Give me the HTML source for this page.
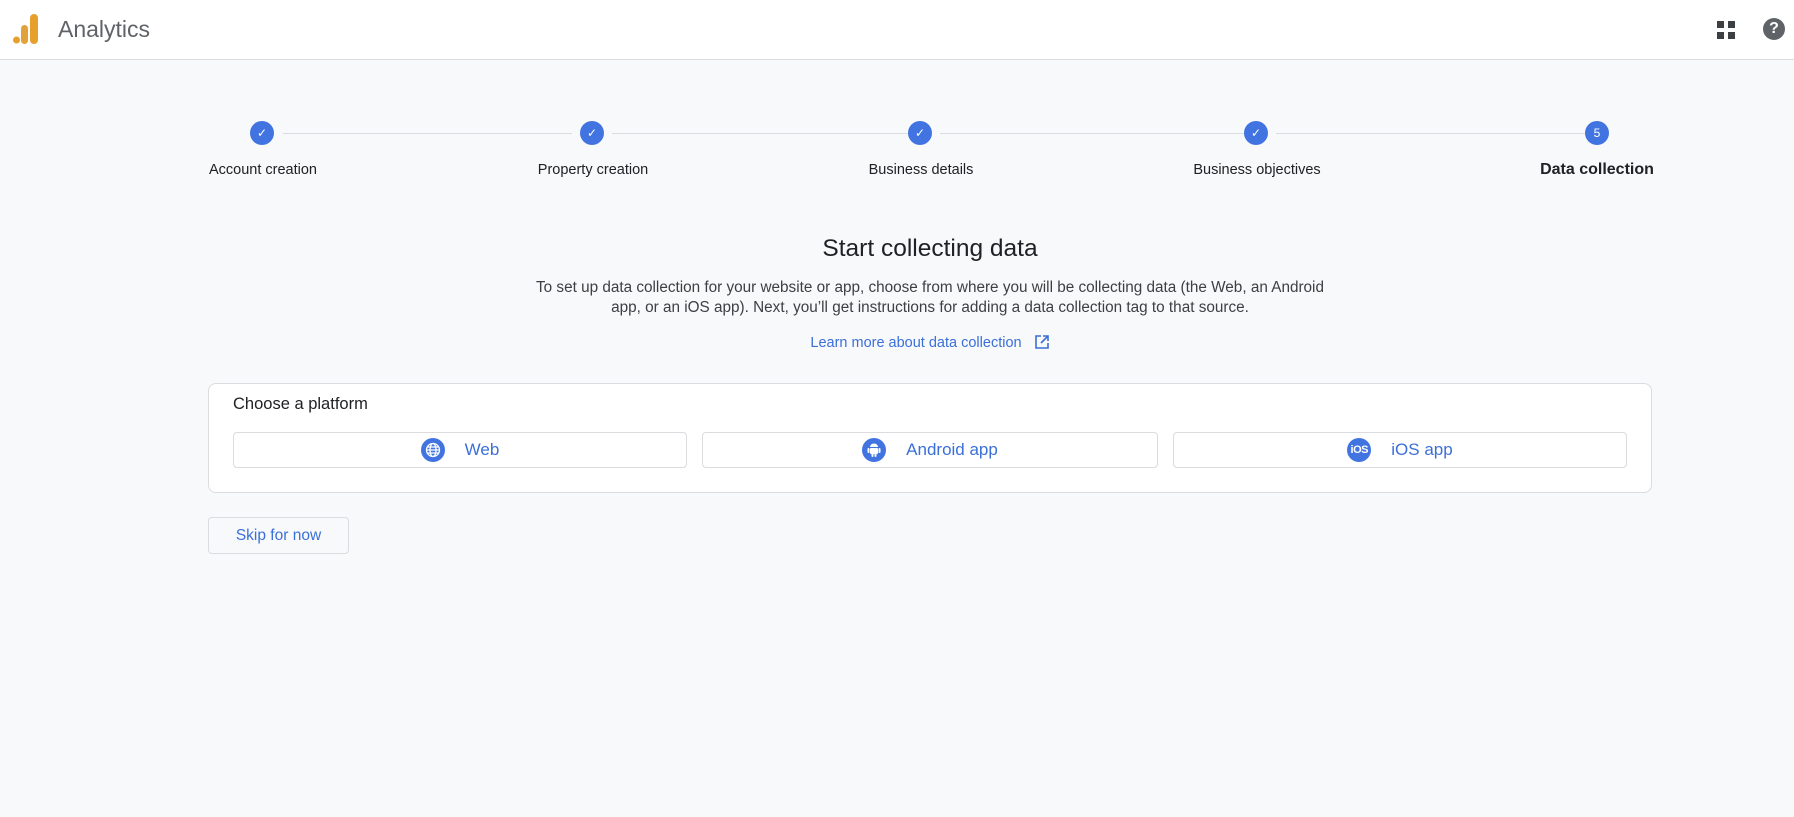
<!DOCTYPE html>
<html><head><style>
*{margin:0;padding:0;box-sizing:border-box}
body{width:1794px;height:817px;background:#f8f9fa;font-family:"Liberation Sans",Arial,sans-serif;position:relative;overflow:hidden;color:#202124}
.hdr{position:absolute;left:0;top:0;width:1794px;height:60px;background:#fff;border-bottom:1px solid #dadce0}
.abs{position:absolute}
.circ{position:absolute;width:24px;height:24px;border-radius:50%;background:#4274e1;top:121px;display:flex;align-items:center;justify-content:center;color:#fff;font-size:12px}
.line{position:absolute;top:133px;height:1px;background:#dadce0}
.lbl{position:absolute;top:162px;font-size:14.5px;color:#202124;transform:translateX(-50%);white-space:nowrap}
.btn{position:absolute;top:432px;height:36px;border:1px solid #dadce0;border-radius:4px;background:#fff;display:flex;align-items:center;justify-content:center;color:#3b6fd8;font-size:17px}
.ic{width:24px;height:24px;border-radius:50%;background:#4274e1;margin-right:20px;display:flex;align-items:center;justify-content:center}
.col{position:absolute;left:208px;width:1444px;text-align:center}
</style></head><body>
<div class="hdr">
 <svg class="abs" style="left:13px;top:14px" width="26" height="30"><rect x="17" y="0" width="8" height="30" rx="4" fill="#e8a02c"/><rect x="8" y="11" width="7" height="19" rx="3.5" fill="#e3a13a"/><circle cx="3.5" cy="26" r="3.5" fill="#e8a02c"/></svg>
 <div class="abs" style="left:58px;top:16px;font-size:23px;color:#5f6368">Analytics</div>
 <svg class="abs" style="left:1717px;top:21px" width="18" height="18"><rect x="0" y="0" width="7" height="7" fill="#3c4043"/><rect x="11" y="0" width="7" height="7" fill="#3c4043"/><rect x="0" y="11" width="7" height="7" fill="#3c4043"/><rect x="11" y="11" width="7" height="7" fill="#3c4043"/></svg>
 <div class="abs" style="left:1763px;top:18px;width:22px;height:22px;border-radius:50%;background:#5f6368;color:#fff;font-weight:bold;font-size:16px;text-align:center;line-height:22px">?</div>
</div>
<div class="line" style="left:283px;width:289px"></div>
<div class="line" style="left:612px;width:296px"></div>
<div class="line" style="left:940px;width:304px"></div>
<div class="line" style="left:1276px;width:309px"></div>
<div class="circ" style="left:250px">✓</div>
<div class="circ" style="left:580px">✓</div>
<div class="circ" style="left:908px">✓</div>
<div class="circ" style="left:1244px">✓</div>
<div class="circ" style="left:1585px">5</div>
<div class="lbl" style="left:263px">Account creation</div>
<div class="lbl" style="left:593px">Property creation</div>
<div class="lbl" style="left:921px">Business details</div>
<div class="lbl" style="left:1257px">Business objectives</div>
<div class="lbl" style="left:1597px;font-weight:bold;font-size:16px;top:161px">Data collection</div>
<div class="col" style="top:235px;font-size:24.5px;color:#202124">Start collecting data</div>
<div class="col" style="top:278px;font-size:15.3px;line-height:20px;color:#3c4043">To set up data collection for your website or app, choose from where you will be collecting data (the Web, an Android<br>app, or an iOS app). Next, you’ll get instructions for adding a data collection tag to that source.</div>
<div class="col" style="top:334px;font-size:14.5px;color:#3b6fd8">Learn more about data collection <svg width="16" height="16" style="margin-left:8px;vertical-align:-3px" viewBox="0 0 16 16" fill="none" stroke="#3b6fd8" stroke-width="1.6"><path d="M7 2H2v12h12V9M9 2h5v5M14 2L7 9"/></svg></div>
<div class="abs" style="left:208px;top:383px;width:1444px;height:110px;background:#fff;border:1px solid #dadce0;border-radius:8px"></div>
<div class="abs" style="left:233px;top:395px;font-size:16.5px;color:#202124">Choose a platform</div>
<div class="btn" style="left:233px;width:454px"><div class="ic"><svg width="16" height="16" viewBox="0 0 16 16" fill="none" stroke="#fff" stroke-width="1.3"><circle cx="8" cy="8" r="6.5"/><ellipse cx="8" cy="8" rx="3" ry="6.5"/><path d="M1.5 8h13M2.5 5h11M2.5 11h11"/></svg></div>Web</div>
<div class="btn" style="left:702px;width:456px"><div class="ic"><svg width="14" height="16" viewBox="0 0 14 16" fill="#fff"><path d="M3 5a4 3.5 0 0 1 8 0z"/><rect x="3" y="6" width="8" height="6" rx="1"/><rect x="0.5" y="6" width="2" height="5" rx="1"/><rect x="11.5" y="6" width="2" height="5" rx="1"/><rect x="4.5" y="11" width="2" height="4" rx="1"/><rect x="7.5" y="11" width="2" height="4" rx="1"/></svg></div>Android app</div>
<div class="btn" style="left:1173px;width:454px"><div class="ic" style="color:#fff;font-size:11px;font-weight:bold;letter-spacing:-0.5px">iOS</div>iOS app</div>
<div class="abs" style="left:208px;top:517px;width:141px;height:37px;border:1px solid #dadce0;border-radius:4px;background:#f8f9fa;color:#3b6fd8;font-size:15.5px;text-align:center;line-height:35px">Skip for now</div>
</body></html>
